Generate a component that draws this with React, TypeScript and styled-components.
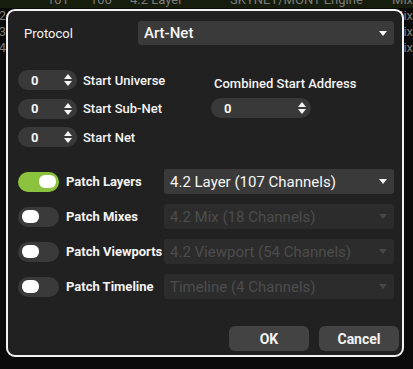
import React from "react";
import styled, { createGlobalStyle } from "styled-components";

const Global = createGlobalStyle`
  html, body { margin: 0; padding: 0; background: #0b0b0b; overflow: hidden; }
  body { font-family: Roboto, "Noto Sans", Arial, sans-serif; }
  * { box-sizing: border-box; }
`;

const Page = styled.div`
  position: relative;
  width: 413px;
  height: 369px;
  overflow: hidden;
  background: #0b0b0b;
`;

const Table = styled.div`
  display: flex;
  flex-direction: column;
  margin-top: -8px;
`;

const TRow = styled.div<{ $sel?: boolean }>`
  display: grid;
  grid-template-columns: 6px 37px 43px 40px 100px 1fr 30px;
  height: 16px;
  align-items: center;
  background: ${(p) => (p.$sel ? "#161d0c" : "transparent")};
  color: #7c7c7c;
  font-size: 13px;
  line-height: 16px;
  white-space: nowrap;
`;

const TCell = styled.div<{ $right?: boolean }>`
  overflow: hidden;
  display: flex;
  justify-content: ${(p) => (p.$right ? "flex-end" : "flex-start")};
  padding-left: ${(p) => (p.$right ? "0" : "4px")};
`;

const Dialog = styled.div`
  position: absolute;
  left: 6px;
  top: 9px;
  width: 398px;
  height: 348px;
  border: 2px solid #f4f4f4;
  border-radius: 9px;
  background: #212121;
  display: flex;
  flex-direction: column;
  padding: 10px 8px 0 10px;
  color: #f2f2f2;
`;

const ProtocolRow = styled.div`
  display: grid;
  grid-template-columns: 120px 1fr;
  align-items: center;
  height: 24px;
`;

const Label = styled.div<{ $bold?: boolean }>`
  font-size: 13px;
  font-weight: ${(p) => (p.$bold ? 700 : 500)};
  color: #f4f4f4;
  white-space: nowrap;
`;

const ProtocolLabel = styled(Label)`
  padding-left: 6px;
  font-weight: 400;
`;

const Select = styled.div<{ $disabled?: boolean; $h: number }>`
  display: flex;
  align-items: center;
  justify-content: space-between;
  height: ${(p) => p.$h}px;
  border-radius: 3px;
  background: ${(p) => (p.$disabled ? "#2c2c2c" : "#3a3a3a")};
  color: ${(p) => (p.$disabled ? "#4d4d4d" : "#f6f6f6")};
  font-size: 15px;
  padding: 0 6px 0 6px;
  white-space: nowrap;
`;

const SelectText = styled.span<{ $medium?: boolean }>`
  font-weight: ${(p) => (p.$medium ? 500 : 400)};
`;

const Caret = styled.span<{ $disabled?: boolean }>`
  width: 0;
  height: 0;
  border-left: 4.5px solid transparent;
  border-right: 4.5px solid transparent;
  border-top: 5px solid ${(p) => (p.$disabled ? "#484848" : "#f6f6f6")};
  margin-right: 1px;
`;

const SpinSection = styled.div`
  display: grid;
  grid-template-columns: 193px 1fr;
  margin-top: 25px;
`;

const SpinCol = styled.div`
  display: flex;
  flex-direction: column;
  gap: 8.5px;
`;

const SpinRow = styled.div`
  display: flex;
  align-items: center;
  gap: 6px;
`;

const Spin = styled.div<{ $w: number }>`
  display: flex;
  align-items: center;
  justify-content: space-between;
  width: ${(p) => p.$w}px;
  height: 20px;
  border-radius: 10px;
  background: #393939;
  padding: 0 4px 0 13px;
  font-size: 13px;
  font-weight: 700;
  color: #f4f4f4;
`;

const Arrows = styled.div`
  display: flex;
  flex-direction: column;
  gap: 2px;
  align-items: center;
  width: 10px;
`;

const Up = styled.span`
  width: 0;
  height: 0;
  border-left: 4.5px solid transparent;
  border-right: 4.5px solid transparent;
  border-bottom: 5px solid #f4f4f4;
`;

const Down = styled(Up)`
  border-bottom: none;
  border-top: 5px solid #f4f4f4;
`;

const Combined = styled.div`
  display: flex;
  flex-direction: column;
  gap: 7px;
  padding-top: 6px;
`;

const CombinedLabel = styled(Label)`
  padding-left: 3px;
`;

const Patches = styled.div`
  display: flex;
  flex-direction: column;
  gap: 10px;
  margin-top: 22px;
`;

const PatchRow = styled.div`
  display: grid;
  grid-template-columns: 48px 98px 230px;
  align-items: center;
  height: 25px;
`;

const Toggle = styled.div<{ $on?: boolean }>`
  width: 41px;
  height: 20px;
  border-radius: 10px;
  background: ${(p) => (p.$on ? "#8bc23e" : "#3a3a3a")};
  display: flex;
  align-items: center;
  justify-content: ${(p) => (p.$on ? "flex-end" : "flex-start")};
  padding: 0 3px 0 4px;
`;

const Knob = styled.span`
  width: 17px;
  height: 13px;
  border-radius: 6px;
  background: #ffffff;
`;

const Footer = styled.div`
  display: flex;
  justify-content: flex-end;
  gap: 10px;
  margin-top: auto;
  margin-right: -5px;
  padding: 0 0 4px 0;
`;

const Button = styled.div`
  width: 80px;
  height: 25px;
  border-radius: 6px;
  background: #434343;
  color: #f4f4f4;
  font-size: 14px;
  font-weight: 700;
  display: flex;
  align-items: center;
  justify-content: center;
`;

const spins = ["Start Universe", "Start Sub-Net", "Start Net"];

const patches = [
  { label: "Patch Layers", value: "4.2 Layer (107 Channels)", on: true },
  { label: "Patch Mixes", value: "4.2 Mix (18 Channels)", on: false },
  { label: "Patch Viewports", value: "4.2 Viewport (54 Channels)", on: false },
  { label: "Patch Timeline", value: "Timeline (4 Channels)", on: false },
];

const bgRows = [
  { sel: true, a: "", b: "101", c: "106", d: "4.2 Layer", e: "SKYNET/MONT Engine", f: "Mix" },
  { a: "2", b: "", c: "", d: "", e: "", f: "Mix" },
  { a: "3", b: "", c: "", d: "", e: "", f: "Mix" },
  { a: "4", b: "", c: "", d: "", e: "", f: "Mix" },
];

function SpinBox({ w }: { w: number }) {
  return (
    <Spin $w={w}>
      <span>0</span>
      <Arrows>
        <Up />
        <Down />
      </Arrows>
    </Spin>
  );
}

export default function App() {
  return (
    <Page>
      <Global />
      <Table>
        {bgRows.map((r, i) => (
          <TRow key={i} $sel={r.sel}>
            <TCell $right>{r.a}</TCell>
            <TCell />
            <TCell>{r.b}</TCell>
            <TCell>{r.c}</TCell>
            <TCell>{r.d}</TCell>
            <TCell>{r.e}</TCell>
            <TCell $right>{r.f}</TCell>
          </TRow>
        ))}
      </Table>
      <Dialog>
        <ProtocolRow>
          <ProtocolLabel>Protocol</ProtocolLabel>
          <Select $h={24}>
            <SelectText $medium>Art-Net</SelectText>
            <Caret />
          </Select>
        </ProtocolRow>
        <SpinSection>
          <SpinCol>
            {spins.map((s) => (
              <SpinRow key={s}>
                <SpinBox w={59} />
                <Label>{s}</Label>
              </SpinRow>
            ))}
          </SpinCol>
          <Combined>
            <CombinedLabel>Combined Start Address</CombinedLabel>
            <SpinBox w={100} />
          </Combined>
        </SpinSection>
        <Patches>
          {patches.map((p) => (
            <PatchRow key={p.label}>
              <Toggle $on={p.on}>
                <Knob />
              </Toggle>
              <Label $bold>{p.label}</Label>
              <Select $h={25} $disabled={!p.on}>
                <SelectText>{p.value}</SelectText>
                <Caret $disabled={!p.on} />
              </Select>
            </PatchRow>
          ))}
        </Patches>
        <Footer>
          <Button>OK</Button>
          <Button>Cancel</Button>
        </Footer>
      </Dialog>
    </Page>
  );
}
